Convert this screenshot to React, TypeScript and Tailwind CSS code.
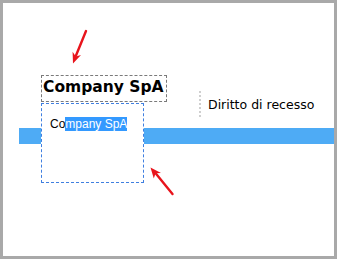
export default function App() {
  return (
    <div className="relative h-[259px] w-[337px] border-[3px] border-[#a9a9a9] bg-white">
      {/* header row */}
      <div className="flex h-[53px] items-start mt-[72px]">
        <div className="ml-[38px] h-[27px] w-[126px] border border-dashed border-[#7a7a7a] pl-px pt-[2px]">
          <span className="block whitespace-nowrap font-['DejaVu_Sans',sans-serif] text-[15.5px] font-bold leading-[18px] text-black">
            Company SpA
          </span>
        </div>
        <div className="ml-[32px] mt-[16px] h-[26px] border-l-2 border-dotted border-[#cfcfcf]" />
        <span className="ml-[7px] mt-[22px] whitespace-nowrap font-['DejaVu_Sans',sans-serif] text-[12.5px] leading-[16px] text-black">
          Diritto di recesso
        </span>
      </div>

      {/* blue band */}
      <div className="ml-[16px] h-[16px] bg-[#4eabf5]" />

      {/* inline editor overlay */}
      <div className="absolute left-[38px] top-[100px] h-[80px] w-[103px] border border-dashed border-[#3f7fe0] bg-white pl-[8px] pt-[13px]">
        <span className="block whitespace-nowrap font-['Liberation_Sans',sans-serif] text-[12px] leading-[14px] text-black">
          Co<span className="bg-[#3399ff] text-white">mpany SpA</span>
        </span>
      </div>

      {/* annotation arrows */}
      <svg
        className="pointer-events-none absolute left-[-3px] top-[-3px] h-[259px] w-[337px]"
        viewBox="0 0 337 259"
      >
        <line x1="86" y1="31" x2="75.8" y2="56" stroke="#e8141c" strokeWidth="2.4" strokeLinecap="round" />
        <polygon points="73,63.5 81,55 75.8,56.5 72.6,51.8" fill="#e8141c" />
        <line x1="172.5" y1="194" x2="155.6" y2="173.2" stroke="#e8141c" strokeWidth="2.4" strokeLinecap="round" />
        <polygon points="150.5,167.5 161,173 155.6,173.2 153.8,178.6" fill="#e8141c" />
      </svg>
    </div>
  );
}
